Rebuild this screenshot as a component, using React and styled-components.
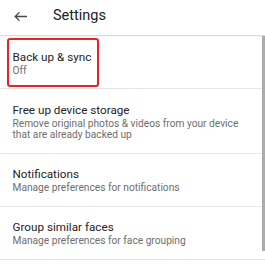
import React from "react";
import styled, { createGlobalStyle } from "styled-components";

const GlobalStyle = createGlobalStyle`
  html, body {
    margin: 0;
    padding: 0;
    background: #ffffff;
    font-family: Roboto, "Liberation Sans", Arial, sans-serif;
  }
`;

const Screen = styled.div`
  width: 265px;
  height: 269px;
  overflow: hidden;
  background: #fff;
`;

const Header = styled.div`
  height: 36px;
  box-sizing: border-box;
  display: flex;
  align-items: flex-start;
  padding: 6px 0 0 14px;
  border-bottom: 1px solid #dcdcdc;
  box-shadow: 0 1px 1px rgba(0, 0, 0, 0.04);
`;

const BackBtn = styled.div`
  width: 13px;
  height: 20px;
  display: flex;
  align-items: center;
  margin-right: 26px;
`;

const Title = styled.div`
  font-size: 14.5px;
  line-height: 20px;
  color: #202124;
`;

const List = styled.div`
  position: relative;
`;

const Row = styled.div`
  position: relative;
  padding: 13.5px 14px 12px 12.5px;
  border-bottom: 1px solid #e6e6e6;
`;

const RowTitle = styled.div`
  font-size: 11.7px;
  line-height: 15px;
  color: #242424;
`;

const RowSub = styled.div`
  font-size: 10.2px;
  line-height: 11.6px;
  color: #6e6e6e;
`;

const Highlight = styled.div`
  position: absolute;
  top: 2px;
  left: 7px;
  width: 92px;
  height: 49px;
  box-sizing: border-box;
  border: 2px solid #e8232a;
  border-radius: 3px;
`;

const ScrollThumb = styled.div`
  position: absolute;
  top: 0;
  right: 0;
  width: 3px;
  height: 215px;
  background: #ababab;
`;

const items = [
  { title: "Back up & sync", sub: "Off", marked: true },
  {
    title: "Free up device storage",
    sub: "Remove original photos & videos from your device that are already backed up",
  },
  { title: "Notifications", sub: "Manage preferences for notifications" },
  { title: "Group similar faces", sub: "Manage preferences for face grouping" },
];

export default function App() {
  return (
    <Screen>
      <GlobalStyle />
      <Header>
        <BackBtn>
          <svg width="13" height="9" viewBox="0 0 13 9" fill="none">
            <path
              d="M12.5 4.5H1.2M5 0.8L1.2 4.5L5 8.2"
              stroke="#4a4a4a"
              strokeWidth="1.3"
              strokeLinecap="square"
            />
          </svg>
        </BackBtn>
        <Title>Settings</Title>
      </Header>
      <List>
        {items.map((it) => (
          <Row key={it.title}>
            {it.marked && <Highlight />}
            <RowTitle>{it.title}</RowTitle>
            <RowSub>{it.sub}</RowSub>
          </Row>
        ))}
        <ScrollThumb />
      </List>
    </Screen>
  );
}
